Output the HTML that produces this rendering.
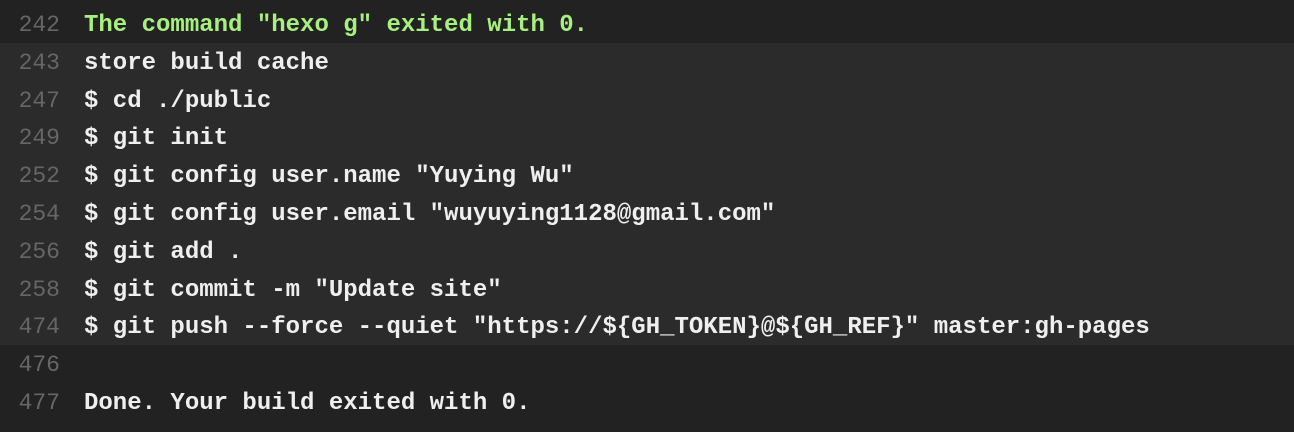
<!DOCTYPE html>
<html><head><style>
html,body{margin:0;padding:0;width:1294px;height:432px;overflow:hidden;background:#222;}
.c{padding-top:5px;font-family:"Liberation Mono",monospace;font-size:24px;font-weight:bold;}
.r{height:37.8px;line-height:41px;white-space:pre;color:#efefef;display:flex;}
.r.h{background:#2b2b2b;}
.n{width:60px;text-align:right;color:#666;font-weight:normal;font-size:23px;}
.t{margin-left:24px;}
.g{color:#a7f07f;}
</style></head><body><div class="c">
<div class="r"><span class="n">242</span><span class="t g">The command "hexo g" exited with 0.</span></div>
<div class="r h"><span class="n">243</span><span class="t">store build cache</span></div>
<div class="r h"><span class="n">247</span><span class="t">$ cd ./public</span></div>
<div class="r h"><span class="n">249</span><span class="t">$ git init</span></div>
<div class="r h"><span class="n">252</span><span class="t">$ git config user.name "Yuying Wu"</span></div>
<div class="r h"><span class="n">254</span><span class="t">$ git config user.email "wuyuying1128@gmail.com"</span></div>
<div class="r h"><span class="n">256</span><span class="t">$ git add .</span></div>
<div class="r h"><span class="n">258</span><span class="t">$ git commit -m "Update site"</span></div>
<div class="r h"><span class="n">474</span><span class="t">$ git push --force --quiet "https://${GH_TOKEN}@${GH_REF}" master:gh-pages</span></div>
<div class="r"><span class="n">476</span><span class="t"></span></div>
<div class="r"><span class="n">477</span><span class="t">Done. Your build exited with 0.</span></div>
</div></body></html>
